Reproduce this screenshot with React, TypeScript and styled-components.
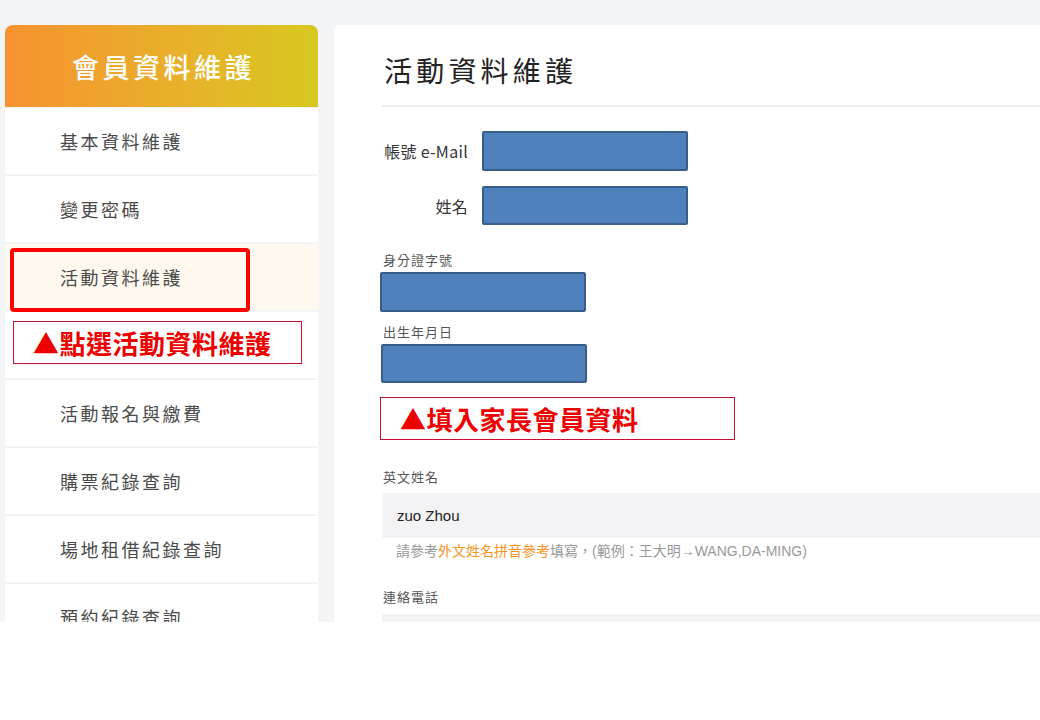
import React from 'react';
import styled, { createGlobalStyle } from 'styled-components';

const GlobalStyle = createGlobalStyle`
  body {
    margin: 0;
    background: #ffffff;
    font-family: "Noto Sans CJK TC", "Liberation Sans", sans-serif;
  }
`;

const Frame = styled.div`
  display: flex;
  align-items: flex-start;
  gap: 16px;
  height: 622px;
  width: 1040px;
  overflow: hidden;
  padding: 25px 0 0 5px;
  box-sizing: border-box;
  background: #f3f4f6;
`;

const Sidebar = styled.nav`
  flex: none;
  width: 313px;
  display: flex;
  flex-direction: column;
  gap: 2px;

  & > * {
    flex-shrink: 0;
  }
`;

const SideHeader = styled.div`
  height: 82px;
  margin-bottom: -1px;
  border-radius: 8px 8px 0 0;
  background: linear-gradient(90deg, #f7922f 0%, #e8b02a 55%, #d8c81f 100%);
  display: flex;
  align-items: center;
  justify-content: center;
  padding-left: 4px;
  color: #ffffff;
  font-size: 27px;
  font-weight: 500;
  letter-spacing: 3.5px;
`;

const MenuItem = styled.div<{ $active?: boolean }>`
  position: relative;
  height: 66px;
  display: flex;
  align-items: center;
  padding-left: 55px;
  background: ${({ $active }) => ($active ? '#fff8ee' : '#ffffff')};
  color: #4a4a4a;
  font-size: 18px;
  letter-spacing: 2.5px;
`;

const NoteItem = styled.div`
  height: 66px;
  background: #ffffff;
  padding: 9px 0 0 8px;
  box-sizing: border-box;
`;

const Highlight = styled.div`
  position: absolute;
  left: 5px;
  top: 4px;
  width: 240px;
  height: 64px;
  box-sizing: border-box;
  border: 4px solid #ff0000;
  border-radius: 4px;
`;

const Note = styled.div<{ $width: number; $shift?: number }>`
  width: ${({ $width }) => $width}px;
  height: 43px;
  margin-left: ${({ $shift }) => $shift ?? 0}px;
  box-sizing: border-box;
  border: 1px solid #c8102e;
  background: #ffffff;
  display: flex;
  align-items: center;
  padding-left: 19px;
  color: #ee0000;
  font-size: 26px;
  font-weight: 700;
  letter-spacing: 0.5px;
  line-height: 1;
`;

const Main = styled.main`
  flex: none;
  width: 760px;
  height: 700px;
  background: #ffffff;
  border-radius: 6px 0 0 0;
  padding: 25px 0 0 48px;
  box-sizing: border-box;
  display: flex;
  flex-direction: column;

  & > * {
    flex-shrink: 0;
  }
`;

const Title = styled.h1`
  margin: 0 0 0 2px;
  font-size: 28px;
  line-height: 40px;
  font-weight: 400;
  letter-spacing: 4.2px;
  color: #222;
`;

const Divider = styled.hr`
  margin: 15px 0 0;
  border: none;
  height: 2px;
  background: #eeeeee;
`;

const InlineRow = styled.div<{ $top: number }>`
  display: flex;
  align-items: center;
  gap: 14px;
  margin-top: ${({ $top }) => $top}px;
`;

const InlineLabel = styled.span`
  width: 86px;
  text-align: right;
  font-size: 16px;
  letter-spacing: 0.3px;
  color: #333;
  white-space: nowrap;
`;

const Redacted = styled.div<{ $height?: number; $shift?: number }>`
  width: 206px;
  height: ${({ $height }) => $height ?? 40}px;
  margin-left: ${({ $shift }) => $shift ?? 0}px;
  box-sizing: border-box;
  background: #4f81bd;
  border: 2px solid #385d8a;
  border-radius: 2px;
`;

const FieldLabel = styled.div<{ $top: number }>`
  margin-top: ${({ $top }) => $top}px;
  margin-left: 1px;
  font-size: 13px;
  letter-spacing: 1px;
  line-height: 18px;
  color: #555;
`;

const Gap = styled.div<{ $h: number }>`
  height: ${({ $h }) => $h}px;
`;

const Input = styled.div<{ $height?: number }>`
  height: ${({ $height }) => $height ?? 45}px;
  background: #f3f3f5;
  display: flex;
  align-items: center;
  padding-left: 15px;
  font-family: "Liberation Sans", "Noto Sans CJK TC", sans-serif;
  font-size: 15px;
  color: #222;
`;

const Hint = styled.div`
  margin-top: 4px;
  padding-left: 14px;
  font-size: 14px;
  line-height: 18px;
  color: #999;
  font-family: "Liberation Sans", "Noto Sans CJK TC", sans-serif;
`;

const HintLink = styled.span`
  color: #f7931e;
`;

const menu = ['購票紀錄查詢', '場地租借紀錄查詢', '預約紀錄查詢'];

export default function App() {
  return (
    <>
      <GlobalStyle />
      <Frame>
        <Sidebar>
          <SideHeader>會員資料維護</SideHeader>
          <MenuItem>基本資料維護</MenuItem>
          <MenuItem>變更密碼</MenuItem>
          <MenuItem $active>
            活動資料維護
            <Highlight />
          </MenuItem>
          <NoteItem>
            <Note $width={289}>▲點選活動資料維護</Note>
          </NoteItem>
          <MenuItem>活動報名與繳費</MenuItem>
          {menu.map((m) => (
            <MenuItem key={m}>{m}</MenuItem>
          ))}
        </Sidebar>
        <Main>
          <Title>活動資料維護</Title>
          <Divider />
          <InlineRow $top={24}>
            <InlineLabel>帳號 e-Mail</InlineLabel>
            <Redacted />
          </InlineRow>
          <InlineRow $top={15}>
            <InlineLabel>姓名</InlineLabel>
            <Redacted $height={39} />
          </InlineRow>
          <FieldLabel $top={26}>身分證字號</FieldLabel>
          <Gap $h={3} />
          <Redacted $shift={-2} />
          <FieldLabel $top={11}>出生年月日</FieldLabel>
          <Gap $h={3} />
          <Redacted $height={39} $shift={-1} />
          <Gap $h={14} />
          <Note $width={355} $shift={-2}>▲填入家長會員資料</Note>
          <FieldLabel $top={28}>英文姓名</FieldLabel>
          <Gap $h={7} />
          <Input>zuo Zhou</Input>
          <Hint>
            請參考<HintLink>外文姓名拼音參考</HintLink>填寫，(範例：王大明→WANG,DA-MING)
          </Hint>
          <FieldLabel $top={28}>連絡電話</FieldLabel>
          <Gap $h={8} />
          <Input $height={45} />
        </Main>
      </Frame>
    </>
  );
}
